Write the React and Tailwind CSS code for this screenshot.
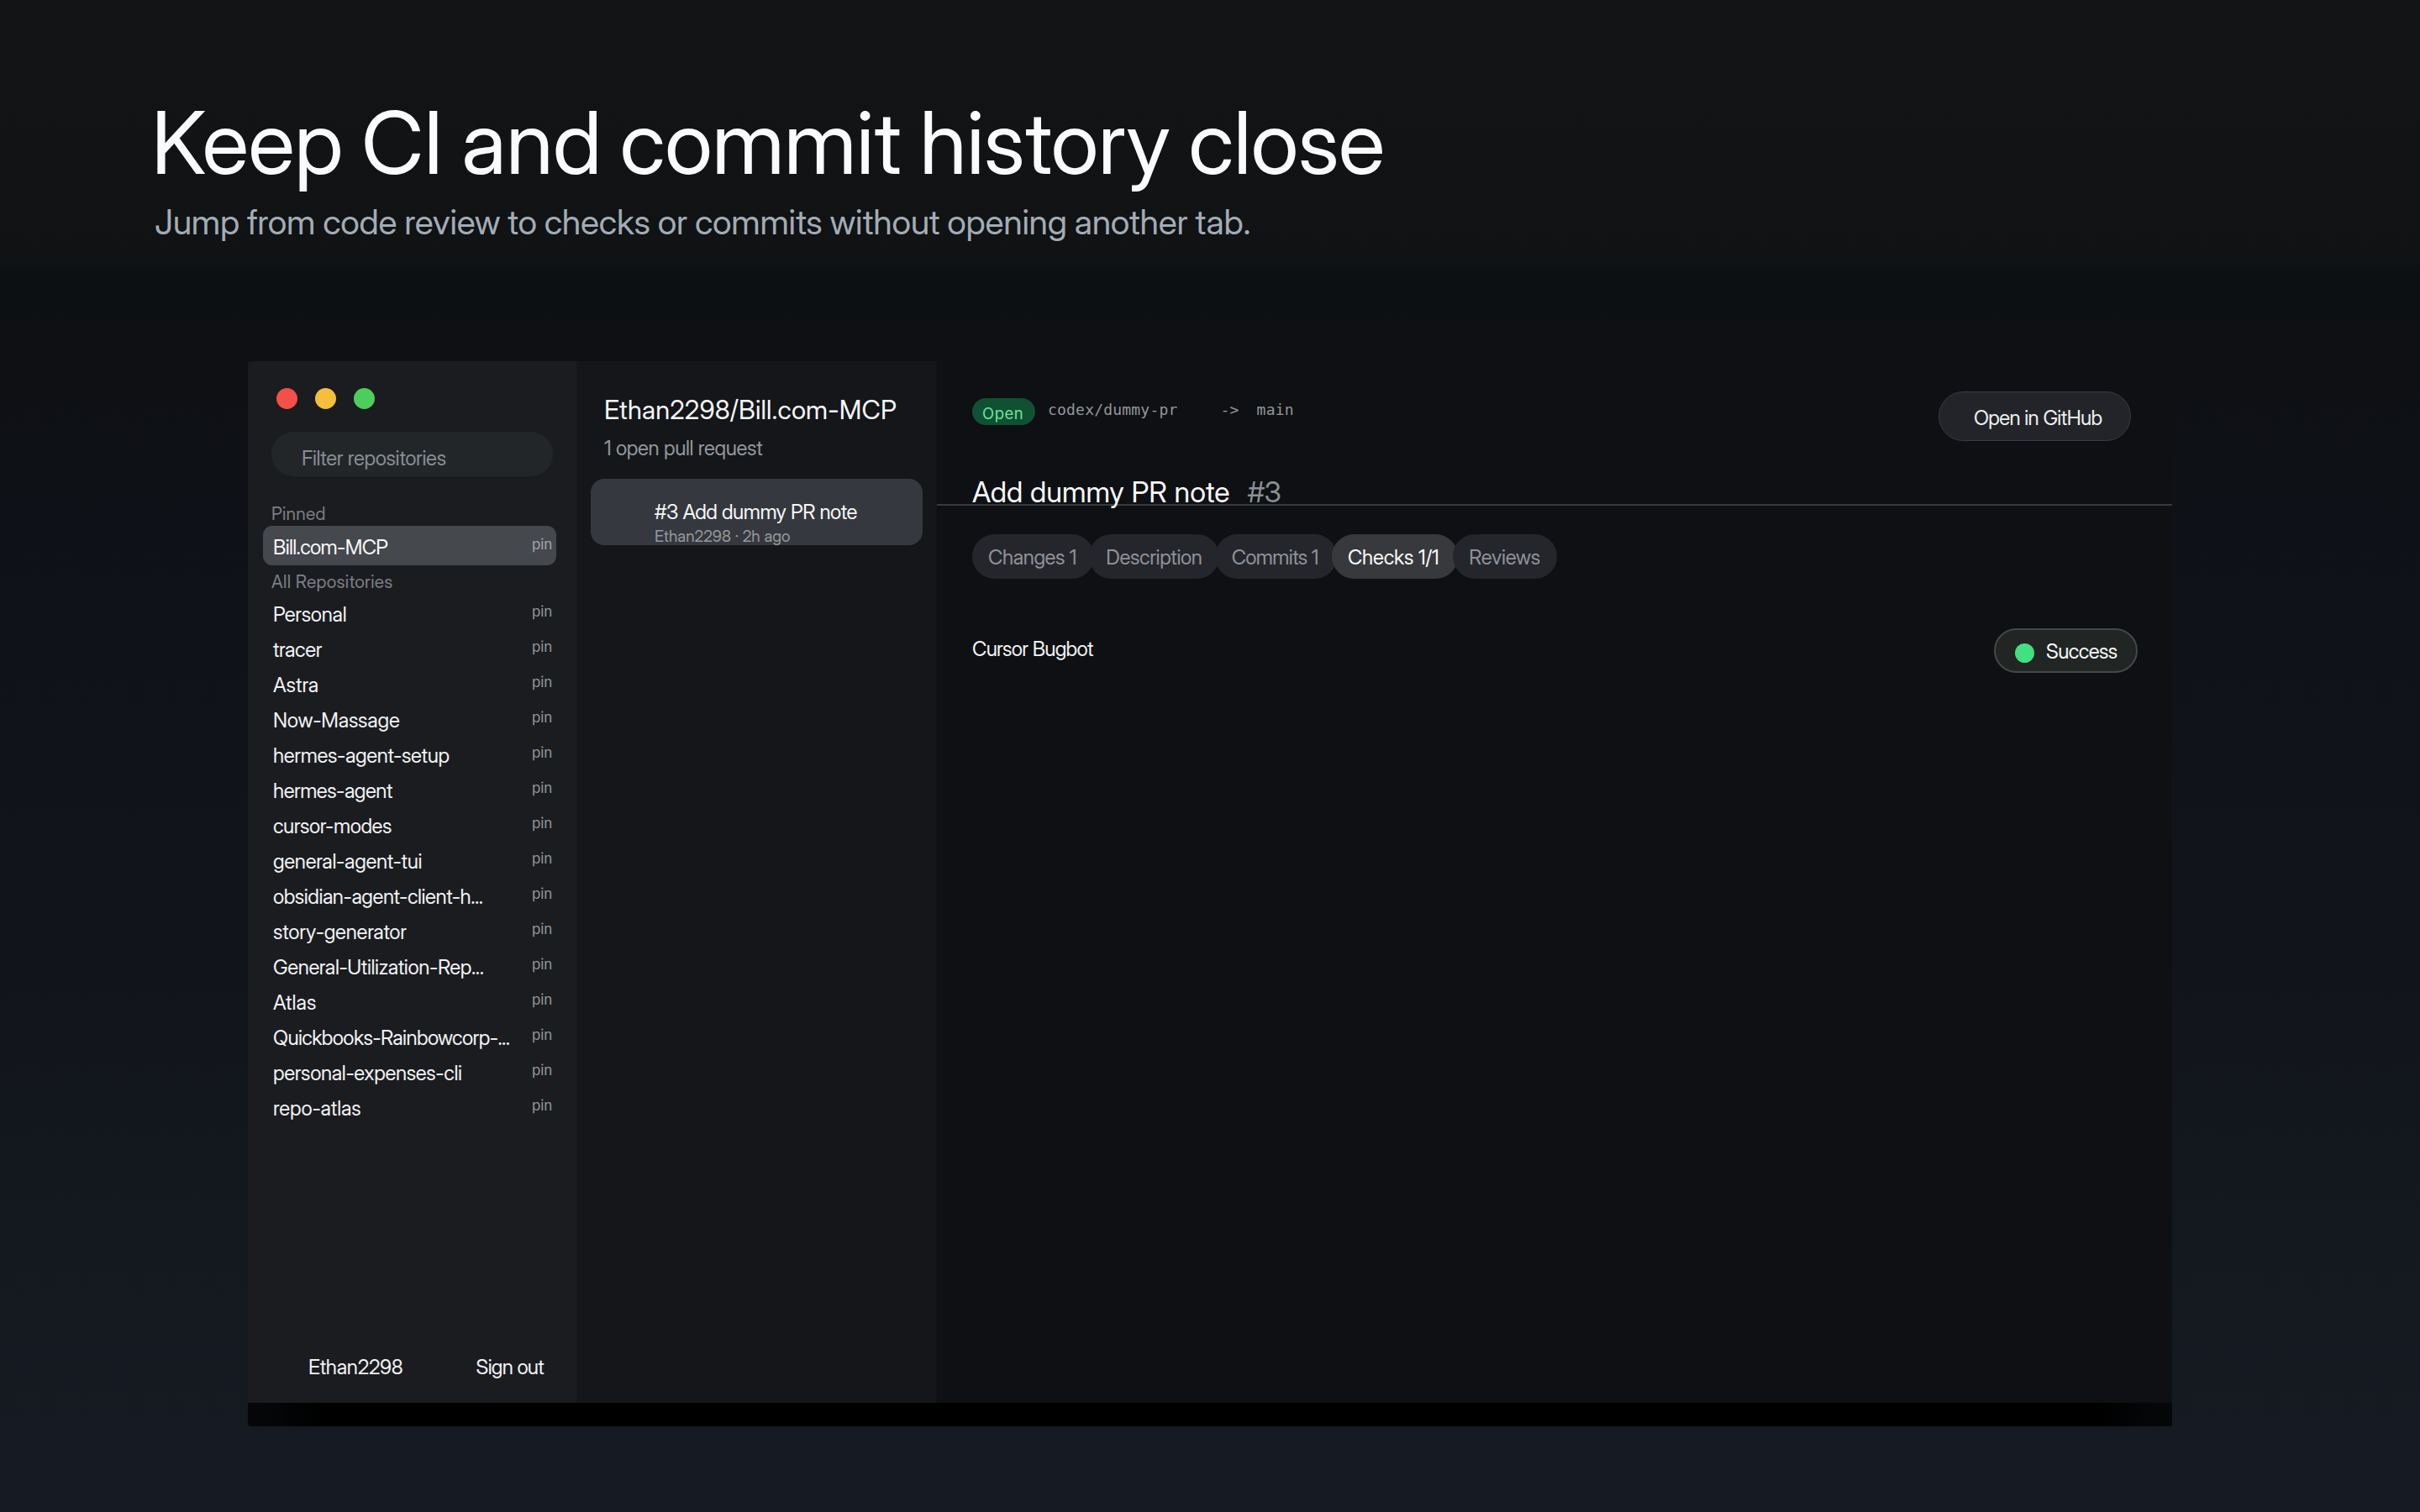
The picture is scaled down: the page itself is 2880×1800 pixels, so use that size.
import React from 'react';

const REPOS = [
  { name: 'Personal', tracking: 'tracking-[-0.28px]' },
  { name: 'tracer', tracking: 'tracking-[-0.4px]' },
  { name: 'Astra', tracking: 'tracking-[-0.1px]' },
  { name: 'Now-Massage', tracking: 'tracking-[-0.2px]' },
  { name: 'hermes-agent-setup', tracking: 'tracking-[-0.36px]' },
  { name: 'hermes-agent', tracking: 'tracking-[-0.5px]' },
  { name: 'cursor-modes', tracking: 'tracking-[-0.44px]' },
  { name: 'general-agent-tui', tracking: 'tracking-[-0.3px]' },
  { name: 'obsidian-agent-client-h...', tracking: 'tracking-[-0.45px]' },
  { name: 'story-generator', tracking: 'tracking-[-0.26px]' },
  { name: 'General-Utilization-Rep...', tracking: 'tracking-[-0.38px]' },
  { name: 'Atlas', tracking: 'tracking-[0.1px]' },
  { name: 'Quickbooks-Rainbowcorp-...', tracking: 'tracking-[-0.6px]' },
  { name: 'personal-expenses-cli', tracking: 'tracking-[-0.35px]' },
  { name: 'repo-atlas', tracking: 'tracking-[-0.16px]' },
];

const TABS = [
  { label: 'Changes 1', box: 'w-[145px] pl-[19px] tracking-[-0.4px]' },
  { label: 'Description', box: 'w-[155px] pl-[20px] tracking-[-0.37px]' },
  { label: 'Commits 1', box: 'w-[145px] pl-[20px] tracking-[-0.67px]' },
  { label: 'Checks 1/1', box: 'w-[150px] pl-[19px] tracking-[-0.2px]', active: true },
  { label: 'Reviews', box: 'w-[124px] pl-[19px] tracking-[-0.2px]' },
];

const RepoRow = ({ name, tracking }) => (
  <div className="flex h-[42px] items-start justify-between">
    <span className={`leading-[43px] text-[#f1f2f4] ${tracking}`}>{name}</span>
    <span className="font-['Inter',sans-serif] text-[17px] leading-9 tracking-[-0.2px] text-[#94979b]">pin</span>
  </div>
);

const Sidebar = () => (
  <aside className="flex w-[391px] flex-col bg-[#1b1c20] pt-8">
    <div className="flex gap-[21px] pl-[34px]">
      <span className="size-[25px] rounded-full bg-[#f44f48]" />
      <span className="size-[25px] rounded-full bg-[#f6be3d]" />
      <span className="size-[25px] rounded-full bg-[#4dcd5b]" />
    </div>

    <div className="mx-7 mt-[27px] h-[53px] rounded-full bg-[#232629] pl-9 leading-[63px] tracking-[-0.34px] text-[#878d93]">
      Filter repositories
    </div>

    <div className="mt-[31px] pl-7 text-[21px] leading-7 tracking-[0.22px] text-[#7c7f84]">Pinned</div>
    <div className="mr-6 ml-[18px] flex h-[47px] items-start justify-between rounded-[11px] bg-[#45484d] pt-1 pr-[5px] pl-3">
      <span className="leading-[43px] tracking-[-0.65px] text-[#f6f7f9]">Bill.com-MCP</span>
      <span className="font-['Inter',sans-serif] text-[17px] leading-9 tracking-[-0.2px] text-[#a3a6aa]">pin</span>
    </div>
    <div className="mt-[5px] pl-7 text-[21px] leading-[29px] tracking-[0.3px] text-[#7c7f84]">All Repositories</div>

    <div className="mt-[3px] pr-[29px] pl-[30px]">
      {REPOS.map((repo) => (
        <RepoRow key={repo.name} {...repo} />
      ))}
    </div>

    <div className="mt-auto flex justify-between pr-[39px] pb-[26px] pl-[72px] leading-8 text-[#f1f2f4]">
      <span className="tracking-[-0.27px]">Ethan2298</span>
      <span className="tracking-[-0.72px]">Sign out</span>
    </div>
  </aside>
);

const PullRequestList = () => (
  <section className="w-[429px] bg-[#141619] pt-[38px]">
    <h2 className="pl-[33px] text-[31px] leading-10 tracking-[0.15px] text-[#f6f7f9]">Ethan2298/Bill.com-MCP</h2>
    <p className="mt-[11px] pl-[33px] leading-[30px] tracking-[-0.35px] text-[#93969b]">1 open pull request</p>
    <div className="mt-[21px] ml-[17px] h-[79px] w-[395px] rounded-2xl bg-[#35383e] pt-[25px] pl-[76px]">
      <div className="leading-[30px] tracking-[-0.45px] text-[#f6f7f9]">#3 Add dummy PR note</div>
      <div className="mt-[2px] text-[19px] leading-[23px] text-[#95989d]">Ethan2298 · 2h ago</div>
    </div>
  </section>
);

const PullRequestDetail = () => (
  <section className="flex-1 bg-[#0e1013]">
    <header className="flex h-[172px] justify-between border-b-2 border-[#38393e] pl-[42px]">
      <div className="pt-11">
        <div className="flex h-8 items-start font-['DejaVu_Sans_Mono',monospace] text-[18px] leading-7 tracking-[0.2px] text-[#94979b]">
          <span className="h-8 w-[75px] rounded-full bg-[#0f5132] pl-[12px] font-['Inter',sans-serif] text-[18.5px] leading-[37px] tracking-[0.5px] text-[#6ce39f]">
            Open
          </span>
          <span className="ml-[15px]">codex/dummy-pr</span>
          <span className="ml-[51px]">-&gt;</span>
          <span className="ml-[21px]">main</span>
        </div>
        <h3 className="mt-[58px] text-[34px] leading-[44px] tracking-[0.1px] text-[#f8f9fb]">
          Add dummy PR note
          <span className="ml-[21px] tracking-[-0.5px] text-[#8b8f95]">#3</span>
        </h3>
      </div>
      <button className="mt-9 mr-[49px] h-[59px] w-[229px] rounded-full border border-[#3a3b40] bg-[#232429] pl-[41px] text-left leading-[61px] tracking-[-0.65px] text-[#eeeff1]">
        Open in GitHub
      </button>
    </header>

    <nav className="mt-[34px] ml-[42px] flex">
      {TABS.map((tab) => (
        <button
          key={tab.label}
          className={`mr-[-5.7px] h-[53px] rounded-full text-left leading-[56px] ${tab.box} ${
            tab.active ? 'bg-[#38393d] text-[#f8f9fb]' : 'bg-[#25262c] text-[#8f9298]'
          }`}
        >
          {tab.label}
        </button>
      ))}
    </nav>

    <div className="mt-[59px] flex justify-between pr-[41px] pl-[42px]">
      <span className="leading-[50px] tracking-[-0.69px] text-[#f1f2f4]">Cursor Bugbot</span>
      <span className="flex h-[53px] w-[171px] items-start rounded-full border-2 border-[#444847] bg-[#212523] pl-[23px] leading-[52px] tracking-[-0.56px] text-[#f6f7f9]">
        <span className="mt-4 mr-[14px] size-[23px] rounded-full bg-[#42e07f]" />
        Success
      </span>
    </div>
  </section>
);

export default function App() {
  return (
    <div className="h-[1800px] w-[2880px] overflow-hidden bg-linear-[180deg,#121416_0%,#101214_17.4%,#0c1013_17.8%,#0e1013_22%,#0e1117_35%,#11141b_62%,#14181f_82%,#161a22_100%] pt-[114px] font-['Inter_Display',Inter,sans-serif] text-[24px] font-normal">
      <h1 className="pl-[180px] text-[103px] leading-[112px] tracking-[-0.5px] text-[#fafbfd] [word-spacing:-3.2px]">
        Keep CI and commit history close
      </h1>
      <p className="mt-[13px] pl-[184px] text-[41px] leading-[50px] tracking-[-0.25px] text-[#a3acb5] [word-spacing:-1px]">
        Jump from code review to checks or commits without opening another tab.
      </p>

      <div className="mt-[141px] ml-[295px] w-[2290px]">
        <div className="flex h-[1240px] overflow-hidden rounded-t-[3px]">
          <Sidebar />
          <PullRequestList />
          <PullRequestDetail />
        </div>
        <div className="h-7 rounded-b-[3px] bg-linear-[90deg,#05080a_0%,#000_4%,#000_96%,#05080a_100%]" />
      </div>
    </div>
  );
}
